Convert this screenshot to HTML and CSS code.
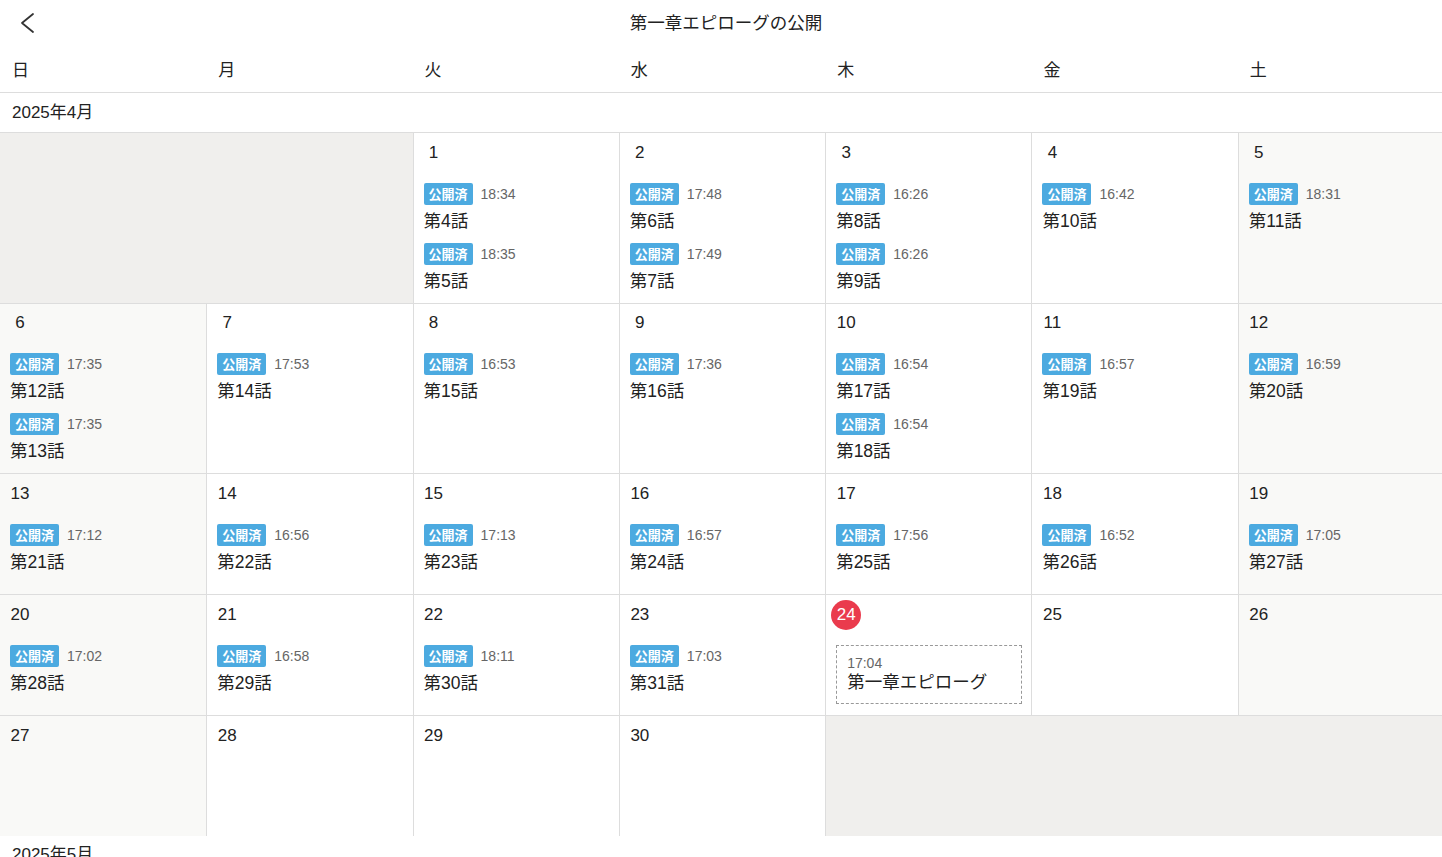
FILE: index.html
```html
<!DOCTYPE html>
<html lang="ja">
<head>
<meta charset="utf-8">
<title>第一章エピローグの公開</title>
<link rel="stylesheet" href="styles.css">
</head>
<body>
<div class="page">
  <header class="topbar">
    <button class="back" aria-label="戻る">
      <svg width="24" height="24" viewBox="0 0 24 24"><polyline points="17,3 6,12 17,21" fill="none" stroke="#333" stroke-width="1.8" stroke-linecap="round" stroke-linejoin="round"/></svg>
    </button>
    <h1 class="title">第一章エピローグの公開</h1>
    <div></div>
  </header>

  <div class="weekdays">
    <div class="wd">日</div><div class="wd">月</div><div class="wd">火</div><div class="wd">水</div><div class="wd">木</div><div class="wd">金</div><div class="wd">土</div>
  </div>

  <div class="month-label">2025年4月</div>

  <div class="month">
    <div class="week">
      <div class="cell out"></div>
      <div class="cell out"></div>
      <div class="cell"><div class="num">1</div>
        <div class="ev"><div class="ev-head"><span class="badge">公開済</span><span class="time">18:34</span></div><div class="ev-title">第4話</div></div>
        <div class="ev"><div class="ev-head"><span class="badge">公開済</span><span class="time">18:35</span></div><div class="ev-title">第5話</div></div>
      </div>
      <div class="cell"><div class="num">2</div>
        <div class="ev"><div class="ev-head"><span class="badge">公開済</span><span class="time">17:48</span></div><div class="ev-title">第6話</div></div>
        <div class="ev"><div class="ev-head"><span class="badge">公開済</span><span class="time">17:49</span></div><div class="ev-title">第7話</div></div>
      </div>
      <div class="cell"><div class="num">3</div>
        <div class="ev"><div class="ev-head"><span class="badge">公開済</span><span class="time">16:26</span></div><div class="ev-title">第8話</div></div>
        <div class="ev"><div class="ev-head"><span class="badge">公開済</span><span class="time">16:26</span></div><div class="ev-title">第9話</div></div>
      </div>
      <div class="cell"><div class="num">4</div>
        <div class="ev"><div class="ev-head"><span class="badge">公開済</span><span class="time">16:42</span></div><div class="ev-title">第10話</div></div>
      </div>
      <div class="cell weekend"><div class="num">5</div>
        <div class="ev"><div class="ev-head"><span class="badge">公開済</span><span class="time">18:31</span></div><div class="ev-title">第11話</div></div>
      </div>
    </div>

    <div class="week">
      <div class="cell weekend"><div class="num">6</div>
        <div class="ev"><div class="ev-head"><span class="badge">公開済</span><span class="time">17:35</span></div><div class="ev-title">第12話</div></div>
        <div class="ev"><div class="ev-head"><span class="badge">公開済</span><span class="time">17:35</span></div><div class="ev-title">第13話</div></div>
      </div>
      <div class="cell"><div class="num">7</div>
        <div class="ev"><div class="ev-head"><span class="badge">公開済</span><span class="time">17:53</span></div><div class="ev-title">第14話</div></div>
      </div>
      <div class="cell"><div class="num">8</div>
        <div class="ev"><div class="ev-head"><span class="badge">公開済</span><span class="time">16:53</span></div><div class="ev-title">第15話</div></div>
      </div>
      <div class="cell"><div class="num">9</div>
        <div class="ev"><div class="ev-head"><span class="badge">公開済</span><span class="time">17:36</span></div><div class="ev-title">第16話</div></div>
      </div>
      <div class="cell"><div class="num">10</div>
        <div class="ev"><div class="ev-head"><span class="badge">公開済</span><span class="time">16:54</span></div><div class="ev-title">第17話</div></div>
        <div class="ev"><div class="ev-head"><span class="badge">公開済</span><span class="time">16:54</span></div><div class="ev-title">第18話</div></div>
      </div>
      <div class="cell"><div class="num">11</div>
        <div class="ev"><div class="ev-head"><span class="badge">公開済</span><span class="time">16:57</span></div><div class="ev-title">第19話</div></div>
      </div>
      <div class="cell weekend"><div class="num">12</div>
        <div class="ev"><div class="ev-head"><span class="badge">公開済</span><span class="time">16:59</span></div><div class="ev-title">第20話</div></div>
      </div>
    </div>

    <div class="week">
      <div class="cell weekend"><div class="num">13</div>
        <div class="ev"><div class="ev-head"><span class="badge">公開済</span><span class="time">17:12</span></div><div class="ev-title">第21話</div></div>
      </div>
      <div class="cell"><div class="num">14</div>
        <div class="ev"><div class="ev-head"><span class="badge">公開済</span><span class="time">16:56</span></div><div class="ev-title">第22話</div></div>
      </div>
      <div class="cell"><div class="num">15</div>
        <div class="ev"><div class="ev-head"><span class="badge">公開済</span><span class="time">17:13</span></div><div class="ev-title">第23話</div></div>
      </div>
      <div class="cell"><div class="num">16</div>
        <div class="ev"><div class="ev-head"><span class="badge">公開済</span><span class="time">16:57</span></div><div class="ev-title">第24話</div></div>
      </div>
      <div class="cell"><div class="num">17</div>
        <div class="ev"><div class="ev-head"><span class="badge">公開済</span><span class="time">17:56</span></div><div class="ev-title">第25話</div></div>
      </div>
      <div class="cell"><div class="num">18</div>
        <div class="ev"><div class="ev-head"><span class="badge">公開済</span><span class="time">16:52</span></div><div class="ev-title">第26話</div></div>
      </div>
      <div class="cell weekend"><div class="num">19</div>
        <div class="ev"><div class="ev-head"><span class="badge">公開済</span><span class="time">17:05</span></div><div class="ev-title">第27話</div></div>
      </div>
    </div>

    <div class="week">
      <div class="cell weekend"><div class="num">20</div>
        <div class="ev"><div class="ev-head"><span class="badge">公開済</span><span class="time">17:02</span></div><div class="ev-title">第28話</div></div>
      </div>
      <div class="cell"><div class="num">21</div>
        <div class="ev"><div class="ev-head"><span class="badge">公開済</span><span class="time">16:58</span></div><div class="ev-title">第29話</div></div>
      </div>
      <div class="cell"><div class="num">22</div>
        <div class="ev"><div class="ev-head"><span class="badge">公開済</span><span class="time">18:11</span></div><div class="ev-title">第30話</div></div>
      </div>
      <div class="cell"><div class="num">23</div>
        <div class="ev"><div class="ev-head"><span class="badge">公開済</span><span class="time">17:03</span></div><div class="ev-title">第31話</div></div>
      </div>
      <div class="cell"><div class="num today">24</div>
        <div class="planned"><div class="planned-time">17:04</div><div class="planned-title">第一章エピローグ</div></div>
      </div>
      <div class="cell"><div class="num">25</div></div>
      <div class="cell weekend"><div class="num">26</div></div>
    </div>

    <div class="week">
      <div class="cell weekend"><div class="num">27</div></div>
      <div class="cell"><div class="num">28</div></div>
      <div class="cell"><div class="num">29</div></div>
      <div class="cell"><div class="num">30</div></div>
      <div class="cell out"></div>
      <div class="cell out"></div>
      <div class="cell out"></div>
    </div>
  </div>

  <div class="month-label next">2025年5月</div>
</div>
</body>
</html>
```

FILE: styles.css
```css
html, body {
  margin: 0;
  padding: 0;
  background: #fff;
  overflow-x: hidden;
}

body {
  font-family: "Liberation Sans", Arial, "Noto Sans CJK JP", sans-serif;
  color: #222;
}

.page {
  width: 1444px;
}

.topbar {
  display: grid;
  grid-template-columns: 1fr auto 1fr;
  align-items: center;
  height: 46px;
}

.back {
  justify-self: start;
  margin-left: 16px;
  width: 24px;
  height: 24px;
  padding: 0;
  border: 0;
  background: none;
  display: flex;
  align-items: center;
  justify-content: center;
  cursor: pointer;
}

.title {
  margin: 0;
  font-size: 17.5px;
  font-weight: normal;
  color: #222;
  line-height: 46px;
  padding-left: 8px;
}

.weekdays {
  display: grid;
  grid-template-columns: repeat(7, 1fr);
  height: 42px;
  padding-top: 4px;
  border-bottom: 1px solid #ddd;
}

.wd {
  padding-left: 12px;
  font-size: 17px;
  line-height: 42px;
  color: #222;
}

.month-label {
  height: 38px;
  line-height: 38px;
  padding-top: 1px;
  padding-left: 12px;
  font-size: 17px;
  border-bottom: 1px solid #ddd;
}

.month-label.next {
  border-bottom: 0;
  height: 34px;
  line-height: 34px;
  padding-top: 2px;
}

.week {
  display: grid;
  grid-template-columns: repeat(7, 1fr);
  min-height: 120px;
}

.week + .week {
  border-top: 1px solid #ddd;
}

.cell {
  padding: 4.5px 9px 0 10px;
  border-left: 1px solid #ddd;
  background: #fff;
  min-width: 0;
}

.cell:first-child {
  border-left: 0;
}

.cell.weekend {
  background: #f9f9f7;
}

.cell.out {
  background: #f0efed;
}

.cell.out + .cell.out {
  border-left: 0;
}

.num {
  width: 30px;
  height: 30px;
  margin-left: -5px;
  margin-bottom: 15px;
  border-radius: 50%;
  text-align: center;
  line-height: 30px;
  font-size: 17px;
  color: #222;
}

.num.today {
  background: #ea3b4d;
  color: #fff;
}

.ev {
  height: 60px;
}

.ev-head {
  display: flex;
  align-items: center;
  height: 22px;
}

.badge {
  display: inline-block;
  height: 22px;
  line-height: 22px;
  padding: 0 5px;
  background: #4caae0;
  color: #fff;
  font-size: 13px;
  font-weight: bold;
  border-radius: 2px;
  font-family: "Noto Sans CJK JP", sans-serif;
}

.time {
  margin-left: 8px;
  font-size: 14px;
  color: #666;
}

.ev-title {
  margin-top: 4px;
  line-height: 24px;
  font-size: 17.5px;
  color: #222;
}

.planned {
  margin-top: 1px;
  border: 1px dashed #999;
  padding: 8px 10px 0 10px;
  box-sizing: border-box;
  height: 59px;
}

.planned-time {
  font-size: 14px;
  color: #666;
  line-height: 18px;
}

.planned-title {
  font-size: 17.5px;
  line-height: 20px;
  color: #222;
}
```
